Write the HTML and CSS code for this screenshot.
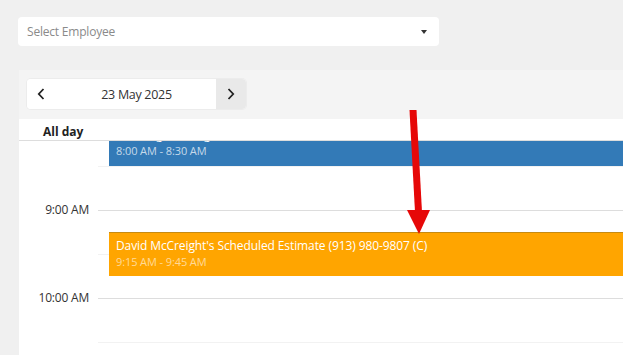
FILE: index.html
```html
<!DOCTYPE html>
<html lang="en">
<head>
<meta charset="utf-8">
<title>Scheduler</title>
<link rel="stylesheet" href="styles.css">
</head>
<body>
<div class="page">
  <div class="select">
    <span class="select-text">Select Employee</span>
    <span class="caret"></span>
  </div>

  <div class="scheduler">
    <div class="toolbar">
      <div class="nav">
        <button class="nav-btn prev" aria-label="Previous">
          <svg width="8" height="12" viewBox="0 0 8 12"><path d="M6.5 1 L1.8 6 L6.5 11" fill="none" stroke="#222" stroke-width="1.8"/></svg>
        </button>
        <span class="nav-date">23 May 2025</span>
        <button class="nav-btn next" aria-label="Next">
          <svg width="8" height="12" viewBox="0 0 8 12"><path d="M1.5 1 L6.2 6 L1.5 11" fill="none" stroke="#222" stroke-width="1.8"/></svg>
        </button>
      </div>
    </div>

    <div class="allday">
      <span class="allday-label">All day</span>
    </div>

    <div class="view">
      <div class="grid">
        <div class="row hour"><div class="time"></div><div class="slot"></div></div>
        <div class="row half"><div class="time"></div><div class="slot"></div></div>
        <div class="row hour"><div class="time"><span>9:00 AM</span></div><div class="slot"></div></div>
        <div class="row half"><div class="time"></div><div class="slot"></div></div>
        <div class="row hour"><div class="time"><span>10:00 AM</span></div><div class="slot"></div></div>
        <div class="row half"><div class="time"></div><div class="slot"></div></div>

        <div class="events">
          <div class="event blue" style="top:0px;height:44px">
            <div class="ev-title">Morning Meeting (A)</div>
            <div class="ev-time">8:00 AM - 8:30 AM</div>
          </div>
          <div class="event orange" style="top:110px;height:44px">
            <div class="ev-title">David McCreight's Scheduled Estimate (913) 980-9807 (C)</div>
            <div class="ev-time">9:15 AM - 9:45 AM</div>
          </div>
        </div>
      </div>
    </div>
  </div>
</div>

<svg class="arrow" width="623" height="355" viewBox="0 0 623 355">
  <polygon points="409.5,110 416.5,110 422,212 415,212" fill="#e60808"/>
  <polygon points="407,210 430,210 419,234" fill="#e60808"/>
</svg>
</body>
</html>
```

FILE: styles.css
```css
* { box-sizing: border-box; }

html, body {
  margin: 0;
  padding: 0;
  height: 100%;
  overflow: hidden;
}

body {
  background: #f0f0f0;
  font-family: "Segoe UI", "Open Sans", "Noto Sans", sans-serif;
  color: #333;
  position: relative;
}

.page {
  padding: 17px 0 0 18px;
}

.select {
  width: 421px;
  height: 29px;
  background: #fff;
  border-radius: 4px;
  display: flex;
  align-items: center;
  justify-content: space-between;
  padding: 0 12px 0 9px;
}

.select-text {
  font-size: 12px;
  color: #8a8a8a;
  letter-spacing: -0.2px;
}

.caret {
  width: 0;
  height: 0;
  border-left: 3.5px solid transparent;
  border-right: 3.5px solid transparent;
  border-top: 4px solid #333;
  margin-top: 1px;
}

.scheduler {
  margin-top: 24px;
  margin-left: 1px;
  background: #f4f4f4;
  height: 300px;
}

.toolbar {
  padding: 9px 0 10px 8px;
}

.nav {
  display: inline-flex;
  height: 30px;
  width: 219px;
  background: #fff;
  border-radius: 4px;
  overflow: hidden;
  align-items: stretch;
  box-shadow: 0 0 0 1px #ececec;
}

.nav-btn {
  border: 0;
  padding: 0;
  margin: 0;
  width: 30px;
  display: flex;
  align-items: center;
  justify-content: center;
  cursor: pointer;
}

.nav-btn.prev {
  background: #fff;
  width: 28px;
}

.nav-btn.next {
  background: #e9e9e9;
}

.nav-date {
  flex: 1;
  display: flex;
  align-items: center;
  justify-content: center;
  font-size: 12.5px;
  color: #333;
  letter-spacing: -0.3px;
  padding-left: 2px;
}

.allday {
  background: #fff;
  height: 22px;
  border-bottom: 1px solid #ddd;
  display: flex;
  align-items: center;
  padding-left: 24px;
}

.allday-label {
  font-weight: 700;
  font-size: 12px;
  color: #222;
  margin-top: 3px;
}

.view {
  background: #fff;
  height: 220px;
  overflow: hidden;
}

.grid {
  position: relative;
  margin-top: -19px;
}

.row {
  display: flex;
  height: 44px;
}

.time {
  width: 79px;
  flex: none;
  position: relative;
  text-align: right;
  padding-right: 9px;
}

.time span {
  display: block;
  font-size: 12px;
  line-height: 16px;
  margin-top: -8px;
  color: #333;
  letter-spacing: -0.2px;
}

.slot {
  flex: 1;
  border-top: 1px solid #ddd;
}

.row.half .slot {
  border-top-color: #f2f2f2;
}

.events {
  position: absolute;
  left: 90px;
  right: 0;
  top: 0;
}

.event {
  position: absolute;
  left: 0;
  right: 0;
  padding: 5px 7px;
  color: #fff;
}

.event.blue {
  background: #337ab7;
}

.event.orange {
  background: #ffa500;
  border-top: 1px solid #c68a12;
}

.ev-title {
  font-size: 12px;
  line-height: 16px;
  white-space: nowrap;
  letter-spacing: -0.1px;
}

.ev-time {
  font-size: 11px;
  line-height: 16px;
  margin-top: 0px;
  letter-spacing: -0.1px;
}

.event.blue .ev-time {
  color: rgba(255, 255, 255, 0.72);
}

.event.orange .ev-time {
  color: rgba(255, 255, 255, 0.6);
}

.arrow {
  position: absolute;
  left: 0;
  top: 0;
  pointer-events: none;
}
```
